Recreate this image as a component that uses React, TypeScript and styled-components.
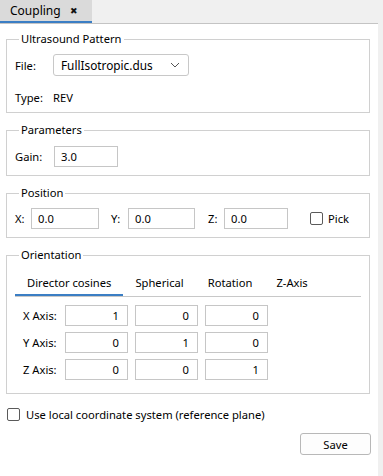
import React, { useState } from "react";
import styled, { createGlobalStyle } from "styled-components";

const GlobalStyle = createGlobalStyle`
  html, body {
    margin: 0;
    padding: 0;
    background: #f0f0f0;
  }
  body {
    font-family: "Noto Sans", "Open Sans", sans-serif;
    font-size: 11.2px;
    color: #000;
  }
`;

const AXES = ["X Axis:", "Y Axis:", "Z Axis:"];
const MATRIX = [
  ["1", "0", "0"],
  ["0", "1", "0"],
  ["0", "0", "1"],
];
const TABS = ["Director cosines", "Spherical", "Rotation", "Z-Axis"];

const App = () => {
  const [activeTab, setActiveTab] = useState(0);

  return (
    <>
      <GlobalStyle />
      <Window>
        <Main>
          <TabBar>
            <DocTab>
              Coupling
              <CloseMark>✖</CloseMark>
            </DocTab>
          </TabBar>

          <Panel>
            <Group $top={7} $bottom={6}>
              <Legend>Ultrasound Pattern</Legend>
              <FieldRow>
                <Label $width={38}>File:</Label>
                <Combo>
                  <span>FullIsotropic.dus</span>
                  <svg width="10" height="6" viewBox="0 0 10 6">
                    <path d="M1 1 L5 5 L9 1" fill="none" stroke="#555" strokeWidth="1" />
                  </svg>
                </Combo>
              </FieldRow>
              <TypeRow>
                <Label $width={38}>Type:</Label>
                <span>REV</span>
              </TypeRow>
            </Group>

            <Group $top={8} $bottom={8}>
              <Legend>Parameters</Legend>
              <FieldRow>
                <Label $width={39}>Gain:</Label>
                <TextBox $width={64} value="3.0" readOnly />
              </FieldRow>
            </Group>

            <Group $top={7} $bottom={8}>
              <Legend>Position</Legend>
              <FieldRow>
                <Label $width={16}>X:</Label>
                <TextBox $width={68} value="0.0" readOnly />
                <Label $width={17} $left={12}>Y:</Label>
                <TextBox $width={67} value="0.0" readOnly />
                <Label $width={16} $left={13}>Z:</Label>
                <TextBox $width={64} value="0.0" readOnly />
                <CheckLabel $left={22}>
                  <Box />
                  Pick
                </CheckLabel>
              </FieldRow>
            </Group>

            <Group $top={7} $bottom={13}>
              <Legend>Orientation</Legend>
              <TabStrip>
                {TABS.map((t, i) => (
                  <SubTab key={t} $active={i === activeTab} onClick={() => setActiveTab(i)}>
                    {t}
                  </SubTab>
                ))}
              </TabStrip>
              <AxisGrid>
                {AXES.map((axis, r) => (
                  <React.Fragment key={axis}>
                    <AxisLabel>{axis}</AxisLabel>
                    {MATRIX[r].map((v, c) => (
                      <NumBox key={c} value={v} readOnly />
                    ))}
                  </React.Fragment>
                ))}
              </AxisGrid>
            </Group>

            <LocalRow>
              <Box />
              Use local coordinate system (reference plane)
            </LocalRow>

            <Footer>
              <SaveButton>Save</SaveButton>
            </Footer>
          </Panel>
        </Main>
        <SideStrip />
      </Window>
    </>
  );
};
export default App;

const Window = styled.div`
  display: flex;
  width: 383px;
  height: 476px;
  overflow: hidden;
`;

const Main = styled.div`
  width: 378px;
  display: flex;
  flex-direction: column;
`;

const SideStrip = styled.div`
  width: 5px;
  background: #f0f0f0;
`;

const TabBar = styled.div`
  height: 23px;
  background: #f0f0f0;
  border-bottom: 1px solid #c4c4c4;
  display: flex;
  align-items: flex-start;
`;

const DocTab = styled.div`
  width: 92px;
  height: 23px;
  box-sizing: border-box;
  background: #dadada;
  border-bottom: 2px solid #3b7ec4;
  padding: 1px 0 0 10px;
  font-size: 12px;
  line-height: 18px;
  display: flex;
  align-items: center;
`;

const CloseMark = styled.span`
  font-size: 9px;
  margin-left: 9px;
  color: #111;
`;

const Panel = styled.div`
  flex: 1;
  background: #fff;
  padding: 7px 8px 0 6px;
  display: flex;
  flex-direction: column;
  gap: 9px;
`;

const Group = styled.fieldset<{ $top: number; $bottom: number }>`
  margin: 0;
  border: 1px solid #d0d0d0;
  padding: ${({ $top, $bottom }) => `${$top}px 8px ${$bottom}px 8px`};
  min-width: 0;
`;

const Legend = styled.legend`
  padding: 0 2px;
  margin-left: 4px;
  line-height: 16px;
`;

const FieldRow = styled.div`
  display: flex;
  align-items: center;
`;

const TypeRow = styled.div`
  display: flex;
  align-items: center;
  margin-top: 14px;
  line-height: 16px;
`;

const Label = styled.span<{ $width: number; $left?: number }>`
  width: ${({ $width }) => $width}px;
  margin-left: ${({ $left }) => $left ?? 0}px;
  flex-shrink: 0;
`;

const Combo = styled.div`
  width: 136px;
  height: 22px;
  box-sizing: border-box;
  border: 1px solid #c8c8c8;
  border-radius: 3px;
  display: flex;
  align-items: center;
  justify-content: space-between;
  padding: 0 8px 0 7px;
  font-size: 11.8px;
`;

const TextBox = styled.input<{ $width: number }>`
  width: ${({ $width }) => $width}px;
  height: 21px;
  box-sizing: border-box;
  border: 1px solid #c6c6c6;
  padding: 0 6px;
  font: inherit;
  outline: none;
`;

const CheckLabel = styled.label<{ $left: number }>`
  margin-left: ${({ $left }) => $left}px;
  display: flex;
  align-items: center;
  gap: 5px;
`;

const Box = styled.span`
  width: 13px;
  height: 13px;
  box-sizing: border-box;
  border: 1px solid #5a5a5a;
  border-radius: 2px;
  background: #fff;
  flex-shrink: 0;
`;

const TabStrip = styled.div`
  display: flex;
  border-bottom: 1px solid #c8c8c8;
  margin-bottom: 8px;
`;

const SubTab = styled.div<{ $active: boolean }>`
  height: 26px;
  box-sizing: border-box;
  display: flex;
  align-items: center;
  padding: 0 12px;
  border-bottom: 2px solid ${({ $active }) => ($active ? "#3b7ec4" : "transparent")};
  cursor: pointer;
`;

const AxisGrid = styled.div`
  display: grid;
  grid-template-columns: 43px repeat(3, 63px);
  column-gap: 7px;
  row-gap: 6px;
  align-items: center;
`;

const AxisLabel = styled.span`
  padding-left: 8px;
  white-space: nowrap;
`;

const NumBox = styled.input`
  width: 63px;
  height: 21px;
  box-sizing: border-box;
  border: 1px solid #c6c6c6;
  text-align: right;
  padding: 0 8px;
  font: inherit;
  outline: none;
`;

const LocalRow = styled.label`
  display: flex;
  align-items: center;
  gap: 6px;
  margin-left: 1px;
  margin-top: 4px;
`;

const Footer = styled.div`
  display: flex;
  justify-content: flex-end;
  margin-top: 2px;
`;

const SaveButton = styled.button`
  width: 71px;
  height: 22px;
  border: 1px solid #b8b8b8;
  border-radius: 3px;
  background: #fdfdfd;
  font: inherit;
  margin-right: -1px;
`;
